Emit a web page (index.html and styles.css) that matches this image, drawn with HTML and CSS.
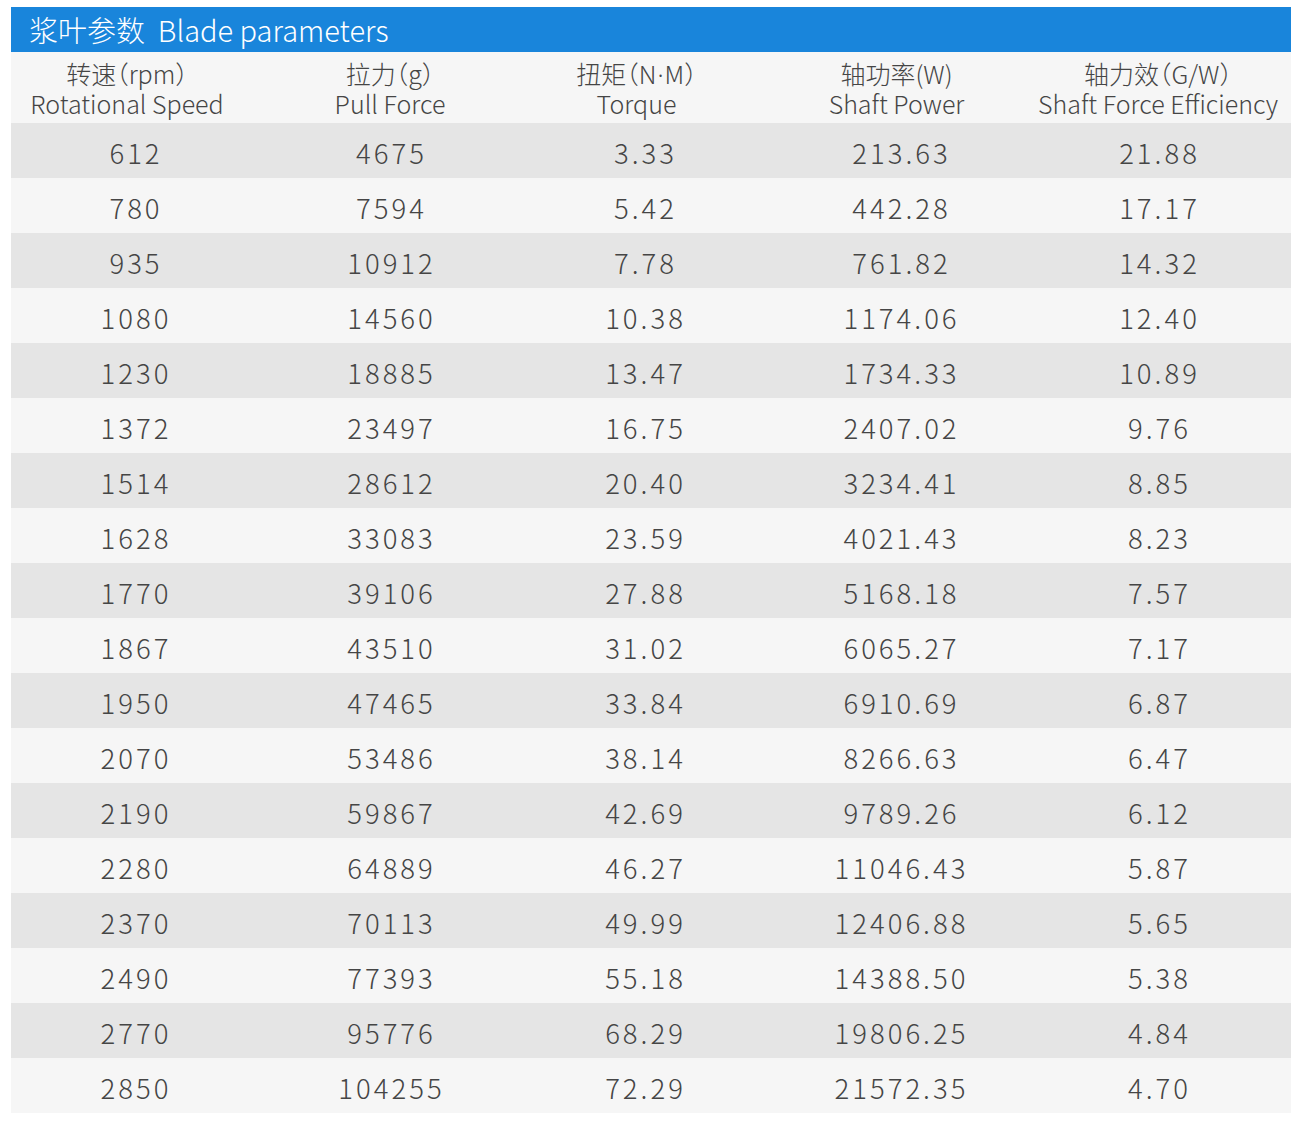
FILE: index.html
```html
<!DOCTYPE html>
<html lang="zh">
<head>
<meta charset="utf-8">
<title>Blade parameters</title>
<link rel="stylesheet" href="styles.css">
</head>
<body>
<div class="sheet">
  <div class="title">浆叶参数&nbsp;&nbsp;Blade parameters</div>
  <div class="row head">
    <div class="cell"><span class="zh">转速（rpm）</span><span>Rotational Speed</span></div>
    <div class="cell"><span class="zh">拉力（g）</span><span>Pull Force</span></div>
    <div class="cell"><span class="zh">扭矩（N<span class="dot">·</span>M）</span><span>Torque</span></div>
    <div class="cell"><span class="zh">轴功率(W)</span><span>Shaft Power</span></div>
    <div class="cell"><span class="zh">轴力效（G/W）</span><span>Shaft Force Efficiency</span></div>
  </div>
  <div class="row data"><div class="cell">612</div><div class="cell">4675</div><div class="cell">3.33</div><div class="cell">213.63</div><div class="cell">21.88</div></div>
  <div class="row data"><div class="cell">780</div><div class="cell">7594</div><div class="cell">5.42</div><div class="cell">442.28</div><div class="cell">17.17</div></div>
  <div class="row data"><div class="cell">935</div><div class="cell">10912</div><div class="cell">7.78</div><div class="cell">761.82</div><div class="cell">14.32</div></div>
  <div class="row data"><div class="cell">1080</div><div class="cell">14560</div><div class="cell">10.38</div><div class="cell">1174.06</div><div class="cell">12.40</div></div>
  <div class="row data"><div class="cell">1230</div><div class="cell">18885</div><div class="cell">13.47</div><div class="cell">1734.33</div><div class="cell">10.89</div></div>
  <div class="row data"><div class="cell">1372</div><div class="cell">23497</div><div class="cell">16.75</div><div class="cell">2407.02</div><div class="cell">9.76</div></div>
  <div class="row data"><div class="cell">1514</div><div class="cell">28612</div><div class="cell">20.40</div><div class="cell">3234.41</div><div class="cell">8.85</div></div>
  <div class="row data"><div class="cell">1628</div><div class="cell">33083</div><div class="cell">23.59</div><div class="cell">4021.43</div><div class="cell">8.23</div></div>
  <div class="row data"><div class="cell">1770</div><div class="cell">39106</div><div class="cell">27.88</div><div class="cell">5168.18</div><div class="cell">7.57</div></div>
  <div class="row data"><div class="cell">1867</div><div class="cell">43510</div><div class="cell">31.02</div><div class="cell">6065.27</div><div class="cell">7.17</div></div>
  <div class="row data"><div class="cell">1950</div><div class="cell">47465</div><div class="cell">33.84</div><div class="cell">6910.69</div><div class="cell">6.87</div></div>
  <div class="row data"><div class="cell">2070</div><div class="cell">53486</div><div class="cell">38.14</div><div class="cell">8266.63</div><div class="cell">6.47</div></div>
  <div class="row data"><div class="cell">2190</div><div class="cell">59867</div><div class="cell">42.69</div><div class="cell">9789.26</div><div class="cell">6.12</div></div>
  <div class="row data"><div class="cell">2280</div><div class="cell">64889</div><div class="cell">46.27</div><div class="cell">11046.43</div><div class="cell">5.87</div></div>
  <div class="row data"><div class="cell">2370</div><div class="cell">70113</div><div class="cell">49.99</div><div class="cell">12406.88</div><div class="cell">5.65</div></div>
  <div class="row data"><div class="cell">2490</div><div class="cell">77393</div><div class="cell">55.18</div><div class="cell">14388.50</div><div class="cell">5.38</div></div>
  <div class="row data"><div class="cell">2770</div><div class="cell">95776</div><div class="cell">68.29</div><div class="cell">19806.25</div><div class="cell">4.84</div></div>
  <div class="row data"><div class="cell">2850</div><div class="cell">104255</div><div class="cell">72.29</div><div class="cell">21572.35</div><div class="cell">4.70</div></div>
</div>
</body>
</html>
```
FILE: styles.css
```css
html, body {
  margin: 0;
  padding: 0;
  background: #ffffff;
}
body {
  padding: 7px 11px;
  font-family: "Noto Sans CJK SC", "Noto Sans", sans-serif;
  font-weight: 300;
  color: #454545;
}
.sheet {
  width: 1280px;
  display: flex;
  flex-direction: column;
}
.title {
  height: 45px;
  background: #1985db;
  color: #ffffff;
  font-size: 29px;
  line-height: 45px;
  padding-left: 18px;
  box-sizing: border-box;
  white-space: nowrap;
}
.row {
  display: grid;
  grid-template-columns: 240px 278px 222px 298px 218px;
  padding-right: 24px;
}
.head {
  height: 71px;
  background: #f6f6f6;
  box-sizing: border-box;
  padding-top: 6px;
}
.head .cell {
  display: flex;
  flex-direction: column;
  align-items: center;
  font-size: 25px;
  line-height: 30px;
  white-space: nowrap;
}
.head .zh {
  font-feature-settings: "halt" 1;
}
.head .cell:first-child {
  padding-right: 8px;
}
.head .cell:nth-child(3),
.head .cell:nth-child(4) {
  padding-right: 7px;
}
.dot {
  font-family: "Noto Sans", sans-serif;
  line-height: 1;
  padding: 0 1px;
}
.data {
  height: 55px;
}
.data:nth-of-type(odd) {
  background: #e5e5e5;
}
.data:nth-of-type(even) {
  background: #f6f6f6;
}
.data .cell {
  display: flex;
  align-items: center;
  justify-content: center;
  font-size: 27.5px;
  letter-spacing: 3px;
  padding-top: 3px;
  padding-left: 3px;
}
.data .cell:first-child {
  padding-left: 10px;
}
.data .cell:nth-child(3) {
  padding-left: 11px;
}
```
